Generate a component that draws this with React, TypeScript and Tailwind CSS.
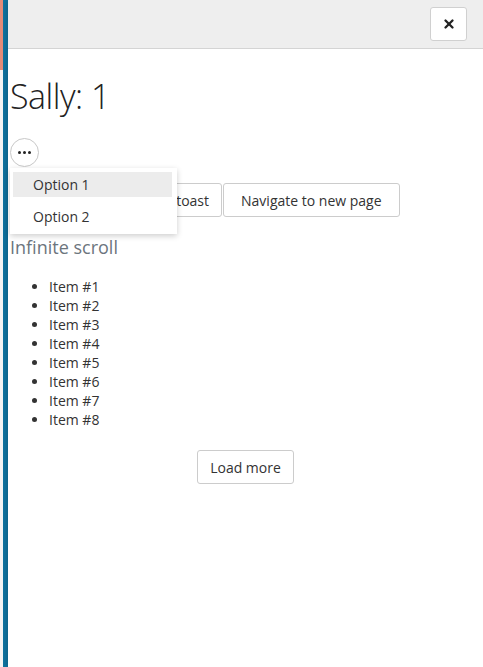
import { X } from "lucide-react";

const items = ["Item #1", "Item #2", "Item #3", "Item #4", "Item #5", "Item #6", "Item #7", "Item #8"];

export default function App() {
  return (
    <div className="flex h-[667px] w-[483px] overflow-hidden bg-white font-['Open_Sans',sans-serif] text-[#212529]">
      {/* page behind the panel */}
      <div className="flex w-[3px] shrink-0 flex-col">
        <div className="h-[70px] bg-[#e38b78]" />
        <div className="flex-1 bg-[#f4f4f4]" />
      </div>
      <div className="w-[5px] shrink-0 bg-[#0f73a0]" />

      {/* panel */}
      <div className="relative flex min-w-0 flex-1 flex-col bg-white shadow-[-2px_0_4px_rgba(0,0,0,0.15)]">
        <div className="flex h-[49px] shrink-0 items-center justify-end border-b border-[#d4d4d4] bg-[#eeeeee] pr-[16px]">
          <button className="flex h-[34px] w-[37px] items-center justify-center rounded-[3px] border border-[#d0d0d0] bg-white">
            <X size={14} strokeWidth={4} className="text-[#222]" />
          </button>
        </div>

        <div className="flex flex-col px-[2px]">
          <h1 className="mt-[26px] text-[34px] leading-[42px] font-light tracking-[-0.5px] text-[#222]">Sally: 1</h1>

          <div className="relative mt-[21px] h-[28px]">
            <button className="flex h-[29px] w-[29px] items-center justify-center rounded-full border border-[#c8c8c8] bg-white">
              <span className="flex gap-[2px]">
                <span className="h-[3px] w-[3px] rounded-full bg-[#222]" />
                <span className="h-[3px] w-[3px] rounded-full bg-[#222]" />
                <span className="h-[3px] w-[3px] rounded-full bg-[#222]" />
              </span>
            </button>
            <div className="absolute left-0 top-[30px] z-10 w-[167px] bg-white pt-[4px] pb-[4px] pl-[3px] pr-[5px] shadow-[0_2px_6px_rgba(0,0,0,0.2)]">
              <div className="flex h-[25px] items-center bg-[#ececec] pl-[20px] text-[14px] text-[#333]">Option 1</div>
              <div className="flex h-[33px] items-center pt-[6px] pl-[20px] text-[14px] text-[#333]">Option 2</div>
            </div>
          </div>

          <div className="mt-[17px] flex justify-start gap-[1px] pl-[114px]">
            <button className="h-[34px] rounded-[3px] border border-[#cccccc] bg-white px-[12px] text-[14px] text-[#333]">Show toast</button>
            <button className="h-[34px] rounded-[3px] border border-[#cccccc] bg-white px-[17px] text-[14px] text-[#333]">Navigate to new page</button>
          </div>

          <h2 className="mt-[19px] text-[18px] leading-[22px] text-[#6c757d]">Infinite scroll</h2>

          <ul className="mt-[19px] list-disc pl-[39px] text-[14px] leading-[19px] text-[#333]">
            {items.map((it) => (
              <li key={it}>{it}</li>
            ))}
          </ul>

          <div className="mt-[21px] flex justify-center">
            <button className="h-[34px] rounded-[3px] border border-[#cccccc] bg-white px-[12px] text-[14px] text-[#333]">Load more</button>
          </div>
        </div>
      </div>
    </div>
  );
}
